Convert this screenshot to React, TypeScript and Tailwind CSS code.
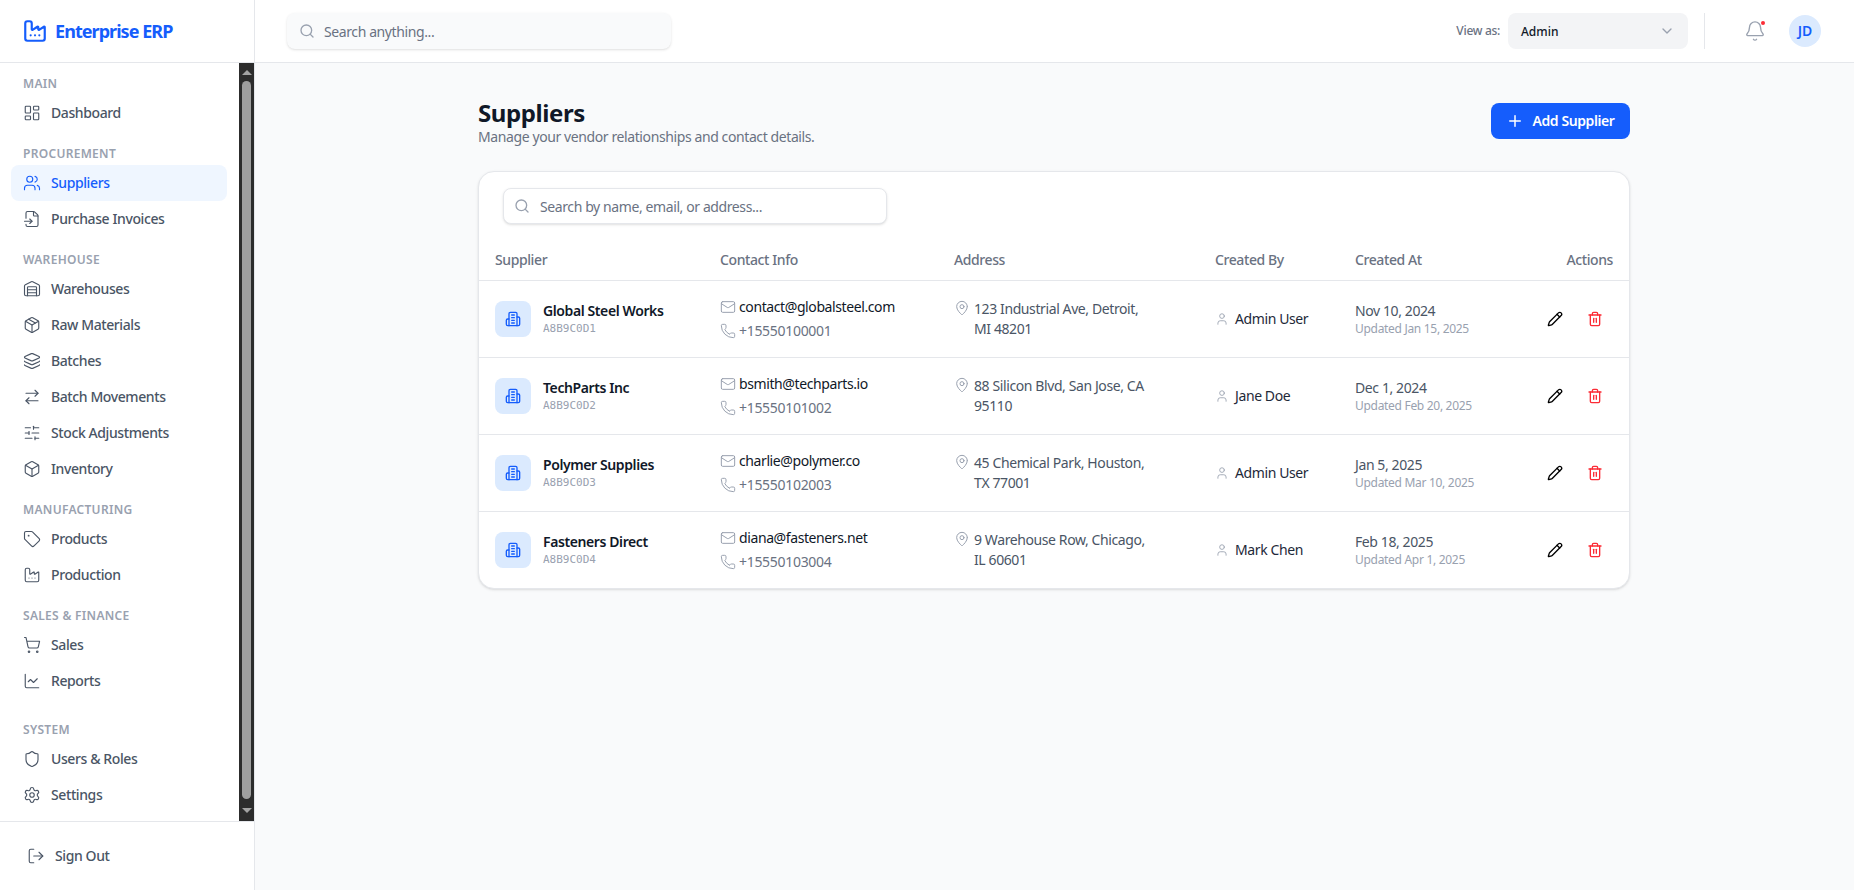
import {
  ArrowRightLeft,
  Bell,
  Box,
  ChartLine,
  ChevronDown,
  Factory,
  FileInput,
  LayoutDashboard,
  Layers,
  LogOut,
  Mail,
  MapPin,
  Package,
  Pencil,
  Phone,
  Plus,
  Search,
  Settings,
  Shield,
  ShoppingCart,
  SlidersHorizontal,
  Tag,
  Trash2,
  User,
  Users,
  Warehouse,
} from "lucide-react";
import React from "react";

type NavItem = { label: string; icon: React.ElementType; active?: boolean };

const NAV: { title: string; className?: string; items: NavItem[] }[] = [
  { title: "Main", items: [{ label: "Dashboard", icon: LayoutDashboard }] },
  {
    title: "Procurement",
    className: "mt-[15px]",
    items: [
      { label: "Suppliers", icon: Users, active: true },
      { label: "Purchase Invoices", icon: FileInput },
    ],
  },
  {
    title: "Warehouse",
    className: "mt-[15px]",
    items: [
      { label: "Warehouses", icon: Warehouse },
      { label: "Raw Materials", icon: Package },
      { label: "Batches", icon: Layers },
      { label: "Batch Movements", icon: ArrowRightLeft },
      { label: "Stock Adjustments", icon: SlidersHorizontal },
      { label: "Inventory", icon: Box },
    ],
  },
  {
    title: "Manufacturing",
    className: "mt-[15px]",
    items: [
      { label: "Products", icon: Tag },
      { label: "Production", icon: Factory },
    ],
  },
  {
    title: "Sales & Finance",
    className: "mt-[15px]",
    items: [
      { label: "Sales", icon: ShoppingCart },
      { label: "Reports", icon: ChartLine },
    ],
  },
  {
    title: "System",
    className: "mt-[23px]",
    items: [
      { label: "Users & Roles", icon: Shield },
      { label: "Settings", icon: Settings },
    ],
  },
];

const SUPPLIERS = [
  {
    name: "Global Steel Works",
    id: "A8B9C0D1",
    email: "contact@globalsteel.com",
    phone: "+15550100001",
    address: "123 Industrial Ave, Detroit, MI 48201",
    by: "Admin User",
    created: "Nov 10, 2024",
    updated: "Updated Jan 15, 2025",
  },
  {
    name: "TechParts Inc",
    id: "A8B9C0D2",
    email: "bsmith@techparts.io",
    phone: "+15550101002",
    address: "88 Silicon Blvd, San Jose, CA 95110",
    by: "Jane Doe",
    created: "Dec 1, 2024",
    updated: "Updated Feb 20, 2025",
  },
  {
    name: "Polymer Supplies",
    id: "A8B9C0D3",
    email: "charlie@polymer.co",
    phone: "+15550102003",
    address: "45 Chemical Park, Houston, TX 77001",
    by: "Admin User",
    created: "Jan 5, 2025",
    updated: "Updated Mar 10, 2025",
  },
  {
    name: "Fasteners Direct",
    id: "A8B9C0D4",
    email: "diana@fasteners.net",
    phone: "+15550103004",
    address: "9 Warehouse Row, Chicago, IL 60601",
    by: "Mark Chen",
    created: "Feb 18, 2025",
    updated: "Updated Apr 1, 2025",
  },
];

const BuildingIcon = () => (
  <svg
    width="16"
    height="16"
    viewBox="0 0 24 24"
    fill="none"
    stroke="currentColor"
    strokeWidth="2"
    strokeLinecap="round"
    strokeLinejoin="round"
    className="text-blue-600"
  >
    <path d="M6 22V4a2 2 0 0 1 2-2h8a2 2 0 0 1 2 2v18Z" />
    <path d="M6 12H4a2 2 0 0 0-2 2v6a2 2 0 0 0 2 2h2" />
    <path d="M18 9h2a2 2 0 0 1 2 2v9a2 2 0 0 1-2 2h-2" />
    <path d="M10 6h4" />
    <path d="M10 10h4" />
    <path d="M10 14h4" />
    <path d="M10 18h4" />
  </svg>
);

const Sidebar = () => {
  return (
    <aside className="w-[255px] shrink-0 h-full flex flex-col bg-white border-r border-gray-200">
      <div className="h-[63px] shrink-0 flex items-center gap-[7px] px-[22px] border-b border-gray-200">
        <Factory size={26} className="text-blue-600" />
        <span className="text-lg font-bold tracking-[-0.95px] text-blue-600">Enterprise ERP</span>
      </div>
      <div className="flex flex-1 min-h-0">
        <nav className="flex-1 pl-[11px] pr-3 pt-[13px]">
          {NAV.map((section) => (
            <div key={section.title} className={section.className}>
              <p className="px-3 mb-[3px] text-xs leading-4 font-semibold uppercase tracking-[0.3px] text-gray-400">
                {section.title}
              </p>
              {section.items.map((item) => (
                <div
                  key={item.label}
                  className={`flex items-center gap-2.5 h-9 px-3 rounded-lg text-sm font-medium ${
                    item.active ? "bg-blue-50 text-blue-600" : "text-gray-600"
                  }`}
                >
                  <item.icon size={18} strokeWidth={1.5} />
                  {item.label}
                </div>
              ))}
            </div>
          ))}
        </nav>
        {/* scrollbar */}
        <div className="w-[15px] shrink-0 bg-[#2c2c2c] flex flex-col items-center">
          <div className="h-[18px] flex items-center justify-center">
            <div className="w-0 h-0 border-x-[5px] border-x-transparent border-b-[5px] border-b-[#a3a3a3]" />
          </div>
          <div className="flex-1 w-[9px] rounded-full bg-[#9f9f9f]" />
          <div className="h-[22px] flex items-center justify-center">
            <div className="w-0 h-0 border-x-[5px] border-x-transparent border-t-[5px] border-t-[#a3a3a3]" />
          </div>
        </div>
      </div>
      <div className="h-[69px] shrink-0 flex items-center gap-2.5 px-[27px] border-t border-gray-200 text-sm font-medium text-gray-600">
        <LogOut size={18} strokeWidth={1.5} />
        Sign Out
      </div>
    </aside>
  );
};

const Topbar = () => {
  return (
    <header className="h-[63px] shrink-0 flex items-center justify-between pl-8 pr-[33px] bg-white border-b border-gray-200">
      <div className="w-[384px] h-9 flex items-center gap-[9px] px-3 rounded-lg bg-gray-50 shadow-sm text-sm text-gray-500">
        <Search size={16} className="text-gray-400" />
        <span className="pt-px">Search anything...</span>
      </div>
      <div className="flex items-center">
        <span className="text-xs font-medium tracking-[-0.3px] text-gray-500 mr-2">View as:</span>
        <div className="w-[180px] h-9 flex items-center justify-between px-[13px] rounded-lg bg-gray-100 text-xs font-medium tracking-normal text-gray-900">
          <span className="pt-px">Admin</span>
          <ChevronDown size={16} className="text-gray-400" />
        </div>
        <div className="w-px h-9 bg-gray-200 mx-4" />
        <div className="relative mx-[23px]">
          <Bell size={22} strokeWidth={1.5} className="text-gray-400" />
          <span className="absolute top-px right-px w-1 h-1 rounded-full bg-red-500" />
        </div>
        <div className="w-8 h-8 flex items-center justify-center rounded-full bg-blue-100 text-sm font-semibold tracking-normal text-blue-600">
          JD
        </div>
      </div>
    </header>
  );
};

const SupplierTable = () => {
  return (
    <table className="w-full table-fixed border-collapse">
      <thead>
        <tr className="h-[56px] text-left text-sm font-medium text-gray-500 [&_th]:align-bottom [&_th]:pb-2.5">
          <th className="w-[225px] pl-4 font-medium">Supplier</th>
          <th className="w-[234px] pl-4 font-medium">Contact Info</th>
          <th className="w-[261px] pl-4 font-medium">Address</th>
          <th className="w-[140px] pl-4 font-medium">Created By</th>
          <th className="w-[160px] pl-4 font-medium">Created At</th>
          <th className="pr-4 font-medium text-right">Actions</th>
        </tr>
      </thead>
      <tbody>
        {SUPPLIERS.map((s) => (
          <tr key={s.id} className="h-[77px] border-t border-gray-200">
            <td className="pl-4">
              <div className="flex items-center gap-3">
                <div className="w-9 h-9 flex items-center justify-center rounded-lg bg-blue-100">
                  <BuildingIcon />
                </div>
                <div>
                  <p className="text-sm font-semibold leading-5 text-gray-900">{s.name}</p>
                  <p className="text-[11px] leading-4 tracking-normal text-gray-400 font-['DejaVu_Sans_Mono',monospace]">
                    {s.id}
                  </p>
                </div>
              </div>
            </td>
            <td className="pl-4">
              <div className="flex items-center gap-[3px] text-sm leading-5 text-gray-900">
                <Mail size={16} strokeWidth={1.5} className="text-gray-400" />
                {s.email}
              </div>
              <div className="flex items-center gap-[3px] mt-1 text-sm leading-5 tracking-[-0.3px] text-gray-500">
                <Phone size={16} strokeWidth={1.5} className="text-gray-400" />
                {s.phone}
              </div>
            </td>
            <td className="pl-4">
              <div className="flex items-start gap-1 text-sm leading-5 text-gray-600">
                <MapPin size={16} strokeWidth={1.5} className="mt-px shrink-0 text-gray-400" />
                <span className="w-[176px]">{s.address}</span>
              </div>
            </td>
            <td className="pl-4">
              <div className="flex items-center gap-[6px] text-sm text-gray-800">
                <User size={14} strokeWidth={1.5} className="text-gray-400" />
                {s.by}
              </div>
            </td>
            <td className="pl-4">
              <p className="text-sm leading-5 text-gray-600">{s.created}</p>
              <p className="text-xs leading-4 tracking-[-0.3px] text-gray-400">{s.updated}</p>
            </td>
            <td className="pr-[17px]">
              <div className="flex items-center justify-end gap-1.5">
                <button className="w-[34px] h-[34px] flex items-center justify-center text-black">
                  <Pencil size={16} />
                </button>
                <button className="w-[34px] h-[34px] flex items-center justify-center text-red-500">
                  <Trash2 size={16} />
                </button>
              </div>
            </td>
          </tr>
        ))}
      </tbody>
    </table>
  );
};

export default function App() {
  return (
    <div className="flex w-full h-[890px] overflow-hidden bg-gray-50 font-['Noto_Sans',sans-serif] tracking-[-0.4px]">
      <Sidebar />
      <div className="flex-1 flex flex-col min-w-0">
        <Topbar />
        <main className="flex-1 pt-8 pr-px">
          <div className="w-[1152px] mx-auto">
            <div className="flex items-center justify-between mb-6">
              <div>
                <h1 className="text-2xl font-bold leading-9 -mb-1 text-gray-900">Suppliers</h1>
                <p className="text-sm leading-5 text-gray-500">Manage your vendor relationships and contact details.</p>
              </div>
              <button className="w-[139px] h-9 flex items-center justify-center gap-2 rounded-lg bg-blue-600 text-sm font-semibold text-white">
                <Plus size={18} />
                Add Supplier
              </button>
            </div>
            <div className="bg-white border border-gray-200 rounded-2xl shadow-sm overflow-hidden">
              <div className="pt-4 pl-6">
                <div className="w-[384px] h-9 flex items-center gap-2.5 px-2.5 bg-white border border-gray-200 rounded-lg shadow-sm text-sm text-gray-500">
                  <Search size={16} className="text-gray-400" />
                  <span className="pt-px">Search by name, email, or address...</span>
                </div>
              </div>
              <SupplierTable />
            </div>
          </div>
        </main>
      </div>
    </div>
  );
}
